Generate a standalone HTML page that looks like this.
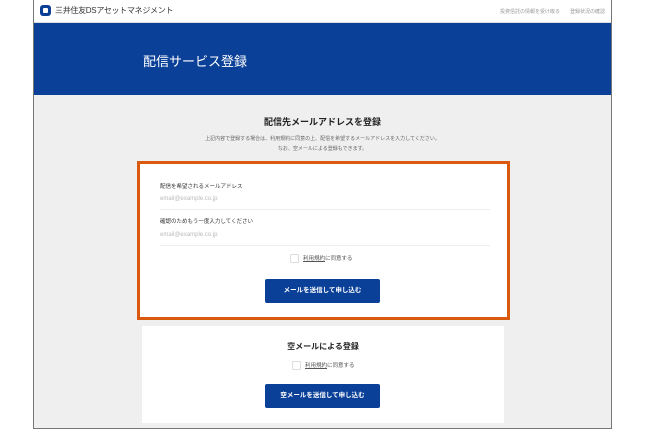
<!DOCTYPE html>
<html><head><meta charset="utf-8"><style>
body{margin:0;width:646px;height:431px;background:#fff;position:relative;overflow:hidden;font-family:"Liberation Sans","Noto Sans CJK JP",sans-serif;}
.frame{position:absolute;left:33px;top:0;width:577px;height:428px;border:1px solid #777;border-top:none;background:#efefef;overflow:hidden}
.hdr{position:absolute;left:0;top:0;width:100%;height:22px;background:#fff;border-bottom:1px solid #ddd}
.logo{position:absolute;left:6px;top:5px;width:11px;height:11px;background:#0b3f95;border-radius:3px}
.logo:after{content:"";position:absolute;left:3px;top:3px;width:5px;height:5px;background:#fff;border-radius:1px}
.lt{position:absolute;left:21px;top:5px;font-size:8px;color:#333;letter-spacing:-0.3px}
.nav{position:absolute;right:6px;top:8px;font-size:5px;color:#999}
.ban{position:absolute;left:0;top:23px;width:100%;height:72px;background:#0b4098}
.ban h1{position:absolute;left:109px;top:28px;margin:0;font-size:13px;font-weight:normal;color:#fff}
.t{position:absolute;left:0;width:100%;text-align:center;color:#222}
.ob{position:absolute;left:103px;top:161px;width:367px;height:153px;border:3px solid #d95a0e;background:#fff}
.card2{position:absolute;left:108px;top:326px;width:362px;height:97px;background:#fff}
.lab{position:absolute;left:20px;font-size:5.5px;color:#333}
.ph{position:absolute;left:20px;font-size:6px;color:#bbb}
.ln{position:absolute;left:20px;width:330px;height:1px;background:#eee}
.btn{position:absolute;width:115px;height:24px;background:#0b4098;border-radius:2px;color:#fff;font-size:6.5px;font-weight:bold;text-align:center;line-height:24px}
.cb{position:absolute;font-size:5.5px;color:#555}
.cb i{display:inline-block;width:7px;height:7px;border:1px solid #ddd;border-radius:1px;vertical-align:middle;margin-right:4px}
.cb u{color:#555}
</style></head><body>
<div class="frame">
<div class="hdr"><div class="logo"></div><div class="lt">三井住友DSアセットマネジメント</div><div class="nav">投資信託の情報を受け取る　　登録状況の確認</div></div>
<div class="ban"><h1>配信サービス登録</h1></div>
<div class="t" style="top:115px;font-size:9px;font-weight:bold">配信先メールアドレスを登録</div>
<div class="t" style="top:134px;font-size:5px;color:#666;line-height:10px">上記内容で登録する場合は、利用規約に同意の上、配信を希望するメールアドレスを入力してください。<br>なお、空メールによる登録もできます。</div>
<div class="ob">
<div class="lab" style="top:18px">配信を希望されるメールアドレス</div>
<div class="ph" style="top:32px">email@example.co.jp</div>
<div class="ln" style="top:45px"></div>
<div class="lab" style="top:53px">確認のためもう一度入力してください</div>
<div class="ph" style="top:68px">email@example.co.jp</div>
<div class="ln" style="top:81px"></div>
<div class="cb" style="left:150px;top:90px"><i></i><u>利用規約</u>に同意する</div>
<div class="btn" style="left:125px;top:115px">メールを送信して申し込む</div>
</div>
<div class="card2">
<div class="t" style="top:15px;font-size:8px;font-weight:bold">空メールによる登録</div>
<div class="cb" style="left:150px;top:35px"><i></i><u>利用規約</u>に同意する</div>
<div class="btn" style="left:123px;top:58px">空メールを送信して申し込む</div>
</div>
</div>
</body></html>
